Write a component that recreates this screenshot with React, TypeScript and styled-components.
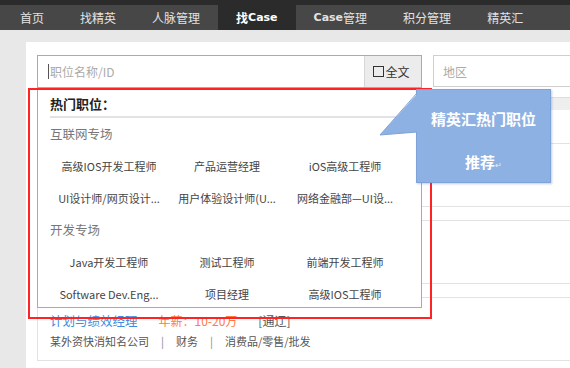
import React from "react";
import styled, { createGlobalStyle } from "styled-components";

const GlobalStyle = createGlobalStyle`
  html, body {
    margin: 0;
    padding: 0;
    background: #e8e8e8;
    overflow: hidden;
  }
  body {
    font-family: "Noto Sans CJK SC", "Noto Sans", sans-serif;
    color: #333;
  }
  * {
    box-sizing: border-box;
  }
`;

const Nav = styled.div`
  display: flex;
  flex-direction: row;
  height: 30px;
  background: #474747;
  border-top: 5px solid #2b2b2b;
`;

const NavItem = styled.div<{ $active?: boolean }>`
  display: flex;
  align-items: center;
  padding: 0 18px;
  font-size: 12px;
  color: ${p => (p.$active ? "#ffffff" : "#e2e2e2")};
  font-weight: ${p => (p.$active ? 700 : 400)};
  background: ${p => (p.$active ? "#2b2b2b" : "transparent")};
  white-space: nowrap;
  &:first-child {
    padding-left: 20px;
  }
`;

const Latin = styled.span<{ $bold?: boolean }>`
  font-family: "DejaVu Sans", sans-serif;
  font-weight: ${p => (p.$bold ? 700 : 400)};
  font-size: 11px;
`;

const Panel = styled.div`
  margin: 12px 0 0 26px;
  background: #ffffff;
  padding: 13px 0 0 11px;
  height: 330px;
  overflow: hidden;
`;

const SearchRow = styled.div`
  display: flex;
  flex-direction: row;
  gap: 11px;
  height: 33px;
`;

const SearchWrap = styled.div`
  position: relative;
  width: 385px;
  flex-shrink: 0;
`;

const KeywordBox = styled.div`
  display: flex;
  flex-direction: row;
  height: 33px;
  border: 1px solid #79b6ee;
  background: #fff;
`;

const KeywordInput = styled.div`
  flex: 1;
  display: flex;
  align-items: center;
  padding-left: 10px;
  font-size: 12px;
  color: #aaa;
  &::before {
    content: "";
    width: 1px;
    height: 15px;
    background: #555;
    margin-right: 1px;
  }
`;

const FullTextButton = styled.div`
  width: 57px;
  display: flex;
  align-items: center;
  justify-content: center;
  padding-right: 3px;
  background: #ececec;
  border-left: 1px solid #d6d6d6;
  font-size: 12px;
  color: #333;
`;

const CheckBox = styled.span`
  width: 11px;
  height: 11px;
  border: 1.5px solid #333;
  margin-right: 1px;
`;

const AreaInput = styled.div`
  width: 200px;
  flex-shrink: 0;
  height: 32px;
  border: 1px solid #cfcfcf;
  display: flex;
  align-items: center;
  padding-left: 9px;
  font-size: 12px;
  color: #aaa;
`;

const Dropdown = styled.div`
  position: absolute;
  left: 0;
  top: 33px;
  width: 385px;
  height: 220px;
  background: #fff;
  border: 1px solid #79b6ee;
  border-top: none;
  padding: 4px 0 0 12px;
  z-index: 5;
`;

const DropTitle = styled.div`
  font-size: 13px;
  font-weight: 700;
  color: #222;
  line-height: 24px;
  height: 26px;
  border-bottom: 2px solid #e2e2e2;
  margin-right: -12px;
`;

const Category = styled.div`
  font-size: 12.5px;
  color: #777;
  line-height: 32px;
`;

const JobGrid = styled.div`
  display: grid;
  grid-template-columns: repeat(3, 118px);
  grid-auto-rows: 32px;
`;

const JobItem = styled.div`
  display: flex;
  align-items: center;
  justify-content: center;
  font-size: 11px;
  color: #444;
  white-space: nowrap;
  overflow: hidden;
`;

const Annotation = styled.div`
  position: absolute;
  left: -9px;
  top: 33px;
  width: 404px;
  height: 231px;
  border: 2px solid #ff2323;
  pointer-events: none;
  z-index: 6;
`;

const Callout = styled.div`
  position: absolute;
  left: 379px;
  top: 34px;
  width: 135px;
  height: 94px;
  background: #8db1e2;
  border: 1px solid #7ea3d9;
  box-shadow: 1px 1px 2px rgba(80, 110, 160, 0.35);
  padding-top: 7px;
  z-index: 7;
  text-align: center;
  color: #fff;
  font-size: 15px;
  font-weight: 700;
  line-height: 43px;
`;

const CalloutTail = styled.svg`
  position: absolute;
  left: 343px;
  top: 38px;
  z-index: 8;
  overflow: visible;
`;

const ReturnMark = styled.span`
  font-size: 8px;
  font-weight: 400;
  color: #e8eef8;
`;

const SortBar = styled.div`
  margin-top: 9px;
  height: 13px;
  background: #eeeeee;
  border-top: 1px solid #dddddd;
`;

const CardList = styled.div`
  display: flex;
  flex-direction: column;
  gap: 13px;
  margin-top: 33px;
`;

const Card = styled.div`
  height: 64px;
  width: 560px;
  border: 1px solid #e2e2e2;
  padding: 13px 0 0 12px;
`;

const CardLine = styled.div`
  display: flex;
  flex-direction: row;
  align-items: center;
  height: 19px;
  font-size: 11px;
  color: #555;
  white-space: nowrap;
  & + & {
    margin-top: 1px;
  }
`;

const JobTitle = styled.span`
  font-size: 12.5px;
  color: #3d8ee0;
  margin-right: 21px;
`;

const Salary = styled.span`
  font-size: 12px;
  color: #ff7a45;
  margin-right: 21px;
`;

const City = styled.span`
  font-size: 12px;
`;

const Sep = styled.span`
  color: #888;
  margin: 0 12px;
`;

const navItems = ["首页", "找精英", "人脉管理", "找Case", "Case管理", "积分管理", "精英汇"];

const sections = [
  {
    name: "互联网专场",
    jobs: [
      "高级IOS开发工程师",
      "产品运营经理",
      "iOS高级工程师",
      "UI设计师/网页设计...",
      "用户体验设计师(U...",
      "网络金融部—UI设...",
    ],
  },
  {
    name: "开发专场",
    jobs: ["Java开发工程师", "测试工程师", "前端开发工程师", "Software Dev.Eng...", "项目经理", "高级IOS工程师"],
  },
];

type CaseItem = {
  title: string;
  salary: string;
  city: string;
  company: string;
  fn: string;
  industry: string;
};

// the first two results sit under the open dropdown, so only their frames show
const cards: (CaseItem | null)[] = [
  null,
  null,
  { title: "计划与绩效经理", salary: "年薪：10-20万", city: "[通辽]", company: "某外资快消知名公司", fn: "财务", industry: "消费品/零售/批发" },
];

const renderNavLabel = (label: string, active: boolean) => {
  const m = label.match(/^(.*?)(Case)(.*)$/);
  if (!m) return label;
  return (
    <>
      {m[1]}
      <Latin $bold={active || m[1] === ""}>{m[2]}</Latin>
      {m[3]}
    </>
  );
};

export default function App() {
  return (
    <>
      <GlobalStyle />
      <Nav>
        {navItems.map(item => (
          <NavItem key={item} $active={item === "找Case"}>
            {renderNavLabel(item, item === "找Case")}
          </NavItem>
        ))}
      </Nav>
      <Panel>
        <SearchRow>
          <SearchWrap>
            <KeywordBox>
              <KeywordInput>职位名称/ID</KeywordInput>
              <FullTextButton>
                <CheckBox />
                全文
              </FullTextButton>
            </KeywordBox>
            <Dropdown>
              <DropTitle>热门职位：</DropTitle>
              {sections.map(sec => (
                <div key={sec.name}>
                  <Category>{sec.name}</Category>
                  <JobGrid>
                    {sec.jobs.map(job => (
                      <JobItem key={job}>{job}</JobItem>
                    ))}
                  </JobGrid>
                </div>
              ))}
            </Dropdown>
            <Annotation />
            <CalloutTail width="40" height="42" viewBox="0 0 40 42">
              <polygon points="38,0 0,42 38,39" fill="#8db1e2" />
              <polyline points="37,0 0,42 37,39" fill="none" stroke="#7ea3d9" strokeWidth="1" />
            </CalloutTail>
            <Callout>
              精英汇热门职位
              <br />
              推荐<ReturnMark>↵</ReturnMark>
            </Callout>
          </SearchWrap>
          <AreaInput>地区</AreaInput>
        </SearchRow>
        <SortBar />
        <CardList>
          {cards.map((c, i) => (
            <Card key={i}>
              {c && (
                <>
                  <CardLine>
                    <JobTitle>{c.title}</JobTitle>
                    <Salary>{c.salary}</Salary>
                    <City>{c.city}</City>
                  </CardLine>
                  <CardLine>
                    {c.company}
                    <Sep>|</Sep>
                    {c.fn}
                    <Sep>|</Sep>
                    {c.industry}
                  </CardLine>
                </>
              )}
            </Card>
          ))}
        </CardList>
      </Panel>
    </>
  );
}
